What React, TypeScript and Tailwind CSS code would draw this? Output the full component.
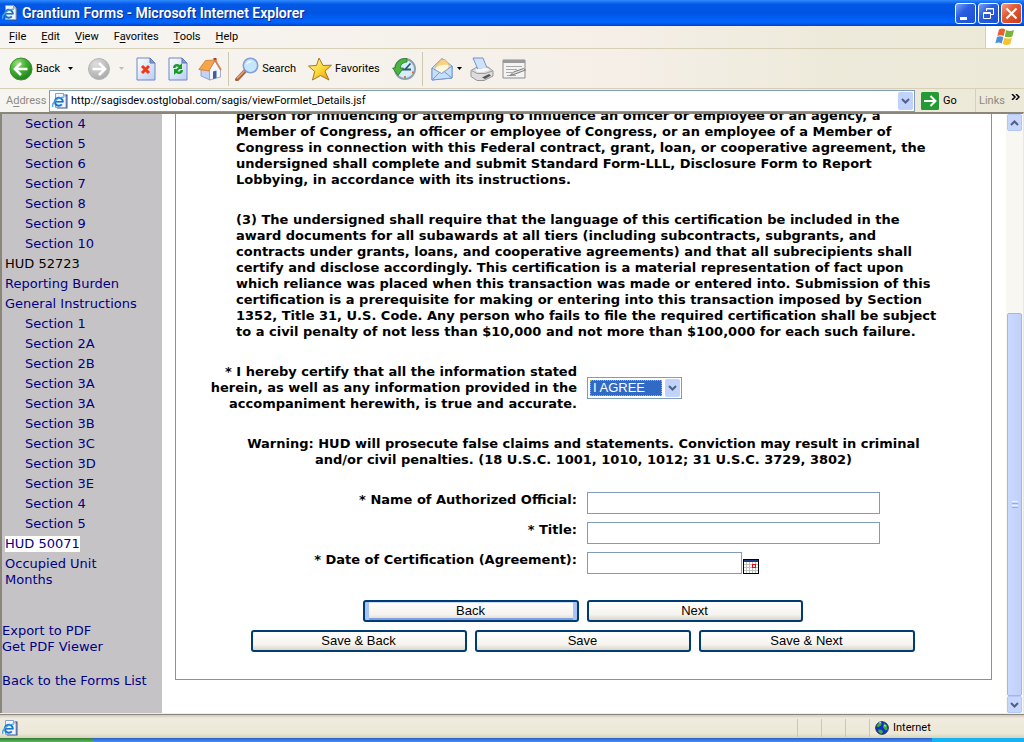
import React, { useState } from 'react';

const UI_FONT = "font-['Tahoma','Roboto','Liberation_Sans',sans-serif]";

interface NavItem {
  label: string;
  kind: 'section' | 'heading' | 'link' | 'current';
}

const NAV: NavItem[] = [
  { label: 'Section 4', kind: 'section' },
  { label: 'Section 5', kind: 'section' },
  { label: 'Section 6', kind: 'section' },
  { label: 'Section 7', kind: 'section' },
  { label: 'Section 8', kind: 'section' },
  { label: 'Section 9', kind: 'section' },
  { label: 'Section 10', kind: 'section' },
  { label: 'HUD 52723', kind: 'heading' },
  { label: 'Reporting Burden', kind: 'link' },
  { label: 'General Instructions', kind: 'link' },
  { label: 'Section 1', kind: 'section' },
  { label: 'Section 2A', kind: 'section' },
  { label: 'Section 2B', kind: 'section' },
  { label: 'Section 3A', kind: 'section' },
  { label: 'Section 3A', kind: 'section' },
  { label: 'Section 3B', kind: 'section' },
  { label: 'Section 3C', kind: 'section' },
  { label: 'Section 3D', kind: 'section' },
  { label: 'Section 3E', kind: 'section' },
  { label: 'Section 4', kind: 'section' },
  { label: 'Section 5', kind: 'section' },
  { label: 'HUD 50071', kind: 'current' },
  { label: 'Occupied Unit Months', kind: 'link' },
];

const MENUS: [string, string, string][] = [
  ['', 'F', 'ile'],
  ['', 'E', 'dit'],
  ['', 'V', 'iew'],
  ['F', 'a', 'vorites'],
  ['', 'T', 'ools'],
  ['', 'H', 'elp'],
];

function PageIcon() {
  return (
    <svg viewBox="0 0 16 16" className="size-4 shrink-0" aria-hidden="true">
      <path d="M5 1.500h10.500v14H5z" fill="#3c4f86" />
      <path d="M3.500.5h8l2.500 2.500v11.500H3.500z" fill="#eef5ff" stroke="#8aa0cc" />
      <path d="M11.500.5v2.500H14" fill="#c5d6f2" stroke="#8aa0cc" />
      <path d="M10.800 8.800a4 4 0 1 0-1 2.600" fill="none" stroke="#1a74c8" strokeWidth="2" />
      <path d="M3.500 8.800h8" stroke="#1a74c8" strokeWidth="1.600" />
      <path d="M1 14C-1 10.500 6 3.500 12 4.200" fill="none" stroke="#45a5ea" strokeWidth="1.200" />
    </svg>
  );
}

function BackIcon() {
  return (
    <svg viewBox="0 0 24 24" className="size-6" aria-hidden="true">
      <defs>
        <radialGradient id="green" cx=".35" cy=".25" r=".8">
          <stop offset="0" stopColor="#9be07c" />
          <stop offset=".5" stopColor="#3fae30" />
          <stop offset="1" stopColor="#1f7d1a" />
        </radialGradient>
      </defs>
      <circle cx="12" cy="12" r="11" fill="url(#green)" stroke="#3d8f33" />
      <path d="M12 6l-6 6 6 6M6.500 12H18.500" fill="none" stroke="#fff" strokeWidth="2.600" />
    </svg>
  );
}

function ForwardIcon() {
  return (
    <svg viewBox="0 0 24 24" className="size-6" aria-hidden="true">
      <defs>
        <radialGradient id="grey" cx=".35" cy=".25" r=".8">
          <stop offset="0" stopColor="#dedede" />
          <stop offset="1" stopColor="#a9a9a9" />
        </radialGradient>
      </defs>
      <circle cx="12" cy="12" r="10.500" fill="url(#grey)" stroke="#b5b5b5" />
      <path d="M12 6l6 6-6 6M17.500 12H5.500" fill="none" stroke="#fff" strokeWidth="2.600" />
    </svg>
  );
}

function SheetIcon({ children }: { children: React.ReactNode }) {
  return (
    <svg viewBox="0 0 20 24" className="h-6 w-5" aria-hidden="true">
      <defs>
        <linearGradient id="sheet" x1="0" y1="0" x2="1" y2="1">
          <stop offset="0" stopColor="#fff" />
          <stop offset="1" stopColor="#b9cdf3" />
        </linearGradient>
      </defs>
      <path d="M1 1h13l5 5v17H1z" fill="url(#sheet)" stroke="#6d88c4" />
      <path d="M14 1v5h5z" fill="#7d9bdc" stroke="#5c78b8" />
      {children}
    </svg>
  );
}

function HomeIcon() {
  return (
    <svg viewBox="0 0 24 24" className="size-6" aria-hidden="true">
      <path d="M15.500 1h3v6h-3z" fill="#b8321c" />
      <path d="M3 11v8l9 4V10z" fill="#c3d2f2" stroke="#7187c0" strokeWidth=".7" />
      <path d="M11.500 12l5.500-8 5.500 9v7l-11 3z" fill="#f4f8ff" stroke="#7d93c6" strokeWidth=".7" />
      <path d="M.8 12.500L7.500 3.500l9.500-.5-6 11z" fill="#f5a54a" stroke="#d07a30" strokeWidth=".8" />
      <path d="M17 3l6 10" stroke="#d98145" strokeWidth="1.700" />
      <path d="M15 14.500l3.500-1v7.500l-3.500 1z" fill="#3f5f9f" />
    </svg>
  );
}

function SearchIcon() {
  return (
    <svg viewBox="0 0 24 24" className="size-6" aria-hidden="true">
      <path d="M9.500 14.500L2 22.500" stroke="#a9623c" strokeWidth="4" strokeLinecap="round" />
      <path d="M9 14.200L2.500 21" stroke="#e5a477" strokeWidth="1.500" strokeLinecap="round" />
      <circle cx="15.500" cy="8.500" r="7.200" fill="#c6e6fb" stroke="#809fd4" strokeWidth="1.600" />
      <path d="M11 7.500c1-3 4-4 6.500-3.300-2 .6-4.500 2-6.500 3.300z" fill="#fff" />
    </svg>
  );
}

function StarIcon() {
  return (
    <svg viewBox="0 0 24 24" className="size-6" aria-hidden="true">
      <defs>
        <linearGradient id="star" x1="0" y1="0" x2="1" y2="1">
          <stop offset="0" stopColor="#fffbb0" />
          <stop offset=".55" stopColor="#fbd530" />
          <stop offset="1" stopColor="#d99412" />
        </linearGradient>
      </defs>
      <path d="M11 1l4 7.500 8.500-.3-6.500 6 4 8.800-8.500-4.500L4.500 23l2.200-8.500L.5 9l8-.5z" fill="url(#star)" stroke="#a8781c" strokeLinejoin="round" />
    </svg>
  );
}

function HistoryIcon() {
  return (
    <svg viewBox="0 0 24 24" className="size-6" aria-hidden="true">
      <circle cx="13" cy="12" r="10" fill="#d4effc" stroke="#8fa0ae" strokeWidth="2" />
      <path d="M13 12.500l5.500-6M10 12.500h9" stroke="#35566f" strokeWidth="1.800" />
      <path d="M13 19v2M20 15l1.500.5" stroke="#d65a2c" strokeWidth="1.500" />
      <path d="M15 1.500C7.500 1 3.500 5.500 3.300 11H.6L6 18.500 11.500 11H8.300C8.600 7.500 10.500 5.500 15 5z" fill="#4bb53f" stroke="#237821" strokeWidth=".8" />
    </svg>
  );
}

function MailIcon() {
  return (
    <svg viewBox="0 0 22 24" className="h-6 w-[22px]" aria-hidden="true">
      <path d="M1 11L11 1.500l10 7.500v12L1 23z" fill="#d9e9fc" stroke="#7796d2" />
      <path d="M4 10l6-7.500h4L18 7v6l-7 4-7-4z" fill="#f8d184" stroke="#d9a757" strokeWidth=".7" />
      <path d="M4.500 11c3-3 9-4 13-3v5l-7 4-6-3.500z" fill="#fff6de" />
      <path d="M1 11l9.500 5.500L21 9v12L1 23z" fill="#c4e0fa" stroke="#7796d2" />
      <path d="M1 23l8-8M21 21l-8-6.500" stroke="#7796d2" />
    </svg>
  );
}

function PrintIcon() {
  return (
    <svg viewBox="0 0 24 24" className="size-6" aria-hidden="true">
      <path d="M1 13.500L7 10h11l5 4v5l-9 4.500H7l-6-4z" fill="#dcdcdc" stroke="#969696" />
      <path d="M3 1h10l4 10-9 1.500z" fill="#cfe2fc" stroke="#7893c8" />
      <path d="M5.500 12.500l11-2 3 2.500-6 2H7z" fill="#f7f7f7" />
      <path d="M1.500 13.500L7 16.500h8l7.500-2.500" fill="none" stroke="#9c9c9c" />
      <path d="M12 20.500l7-3.500 2 1.500-6 3.500z" fill="#565656" />
    </svg>
  );
}

function EditIcon() {
  return (
    <svg viewBox="0 0 24 20" className="h-5 w-6" aria-hidden="true">
      <path d="M1 1h22v18H1z" fill="#f3f3f3" stroke="#8c8c8c" />
      <path d="M1 1h22v3H1z" fill="#9a9a9a" />
      <path d="M4 7.500h16M4 10.500h11M4 13.500h6M5 16.500h9" stroke="#a7a7a7" />
      <path d="M8 16.500l3.500-3.500 10-3.500 2 1.500-10.500 4z" fill="#dedede" stroke="#7b7b7b" />
    </svg>
  );
}

function WindowsFlag() {
  return (
    <svg viewBox="0 0 20 18" className="h-[18px] w-5" aria-hidden="true">
      <path d="M4 1.500C6.500 0 8.500.4 10.200 1.600L8.600 8C6.500 7 4.500 6.800 2.300 8z" fill="#e9602c" />
      <path d="M11.200 2.100c2.300 1.300 4.800 1.300 7.800 0L17.300 8.400c-2.600 1.200-5.200 1.200-7.600 0z" fill="#76b43a" />
      <path d="M2 9.100c2.300-1.200 4.400-1 6.400.1L6.700 15.500c-2-1.200-4-1.300-6.400-.1z" fill="#4b8fdd" />
      <path d="M9.400 9.700c2.500 1.200 5 1.200 7.600 0l-1.700 6.300c-2.600 1.300-5.100 1.200-7.600 0z" fill="#f6c32c" />
    </svg>
  );
}

function GlobeIcon() {
  return (
    <svg viewBox="0 0 14 14" className="size-3.5" aria-hidden="true">
      <circle cx="7" cy="7" r="6.300" fill="#1230c8" stroke="#18304a" />
      <path d="M3 2.500L7 1.500 6 4.500 3.500 6l-2-.5zM9 2l3 2.500.5 4-2 1L8 6zM3.500 8.500L7 9l1 2.500-2 1.500-2.500-2z" fill="#38b044" />
      <path d="M4 2l2-.5M9 4.500l2 .5" stroke="#c8f0d0" />
    </svg>
  );
}

function CalendarIcon() {
  return (
    <svg viewBox="0 0 16 15" className="h-[15px] w-4" shapeRendering="crispEdges" aria-hidden="true">
      <path d="M.5.500h15v14H.500z" fill="#fff" stroke="#000" />
      <path d="M1 1h14v2H1z" fill="#213a7d" />
      <path d="M3.500 3v11M6.500 3v11M9.500 3v11M12.500 3v11M1 5.500h14M1 8.500h14M1 11.500h14" stroke="#c0c0c0" />
      <path d="M9.500 5.500h3v3h-3z" fill="#fff" stroke="#f00" />
    </svg>
  );
}

function Chevron({ up = false }: { up?: boolean }) {
  return (
    <svg viewBox="0 0 9 6" className="h-1.5 w-[9px]" aria-hidden="true">
      <path d={up ? 'M1 5l3.500-3.500L8 5' : 'M1 1l3.500 3.500L8 1'} fill="none" stroke="#4d6185" strokeWidth="2" />
    </svg>
  );
}

function Caret({ color }: { color: string }) {
  return (
    <svg viewBox="0 0 5 3" className="h-[3px] w-[5px]" aria-hidden="true">
      <path d="M0 0h5L2.500 3z" fill={color} />
    </svg>
  );
}

function TitleBar() {
  const button = 'flex size-[21px] items-center justify-center rounded-[3px] border border-white';
  return (
    <header className="flex h-[26px] shrink-0 items-center bg-[linear-gradient(#2f8bff,#0458e6_16%,#0054e3_50%,#0066ff_85%,#0140c8)] pr-0.5 pl-0.5">
      <PageIcon />
      <h1 className="ml-1 flex-1 text-sm font-semibold text-white [text-shadow:1px_1px_#0a2a88]">
        Grantium Forms - Microsoft Internet Explorer
      </h1>
      <div className="flex gap-0.5">
        <button aria-label="Minimize" className={`${button} bg-[linear-gradient(135deg,#7ba2f3,#2a5de0_40%,#1c4fd8)]`}>
          <svg viewBox="0 0 19 19" className="size-[19px]"><path d="M4 13h7v3H4z" fill="#fff" /></svg>
        </button>
        <button aria-label="Restore" className={`${button} bg-[linear-gradient(135deg,#7ba2f3,#2a5de0_40%,#1c4fd8)]`}>
          <svg viewBox="0 0 19 19" className="size-[19px]" fill="none" stroke="#fff">
            <path d="M7.500 7V4.500h7v6H12M7 5h8" />
            <path d="M4.500 8.500h7v6h-7zM4 9.500h8" />
          </svg>
        </button>
        <button aria-label="Close" className={`${button} bg-[linear-gradient(135deg,#f0a088,#e25a38_40%,#c83c18)]`}>
          <svg viewBox="0 0 19 19" className="size-[19px]"><path d="M4.500 4.500l10 10M14.500 4.500l-10 10" stroke="#fff" strokeWidth="2.200" /></svg>
        </button>
      </div>
    </header>
  );
}

function MenuBar() {
  return (
    <nav className="flex h-[23px] shrink-0 border-b border-[#d8d0b4]">
      <div className="flex flex-1 items-center gap-[15px] pl-[9px]">
        {MENUS.map(([before, key, after]) => (
          <button key={before + key + after}>
            {before}<span className="underline underline-offset-2">{key}</span>{after}
          </button>
        ))}
      </div>
      <div className="flex w-[39px] items-center justify-center border-l border-[#d8d0b4] bg-white">
        <WindowsFlag />
      </div>
    </nav>
  );
}

function Toolbar() {
  return (
    <div className="flex h-10 shrink-0 items-center border-b border-[#d8d0b4] pl-[9px]">
      <button className="flex items-center gap-[3px]"><BackIcon />Back</button>
      <button className="ml-2" aria-label="Back history"><Caret color="#000" /></button>
      <button className="ml-3.5" aria-label="Forward"><ForwardIcon /></button>
      <button className="ml-2" aria-label="Forward history"><Caret color="#bbb" /></button>
      <button className="ml-3" aria-label="Stop">
        <SheetIcon><path d="M6 9l7 7M13 9l-7 7" stroke="#ee3a16" strokeWidth="3" /></SheetIcon>
      </button>
      <button className="ml-3" aria-label="Refresh">
        <SheetIcon>
          <path d="M5 11c0-4 4-5 7-3l2-2v6H8.500l2-2C9 9 7.500 9.500 7.500 11z" fill="#1c9a26" />
          <path d="M15 13c0 4-4 5-7 3l-2 2v-6h5.500l-2 2c1.500 1 3 .5 3-1z" fill="#1c9a26" />
        </SheetIcon>
      </button>
      <button className="ml-2.5" aria-label="Home"><HomeIcon /></button>
      <div className="ml-1.5 h-[34px] w-px bg-[#cfc8b0]" />
      <button className="ml-1.5 flex items-center gap-[3px]"><SearchIcon />Search</button>
      <button className="ml-3 flex items-center gap-[3px]"><StarIcon />Favorites</button>
      <button className="ml-3" aria-label="History"><HistoryIcon /></button>
      <div className="ml-1.5 h-[34px] w-px bg-[#cfc8b0]" />
      <button className="ml-2 flex items-center gap-1" aria-label="Mail"><MailIcon /><Caret color="#000" /></button>
      <button className="ml-2" aria-label="Print"><PrintIcon /></button>
      <button className="ml-2" aria-label="Edit"><EditIcon /></button>
    </div>
  );
}

function AddressBar() {
  return (
    <div className="flex h-[23px] shrink-0 items-center pl-1.5">
      <label htmlFor="address" className="w-[43px] text-[#8c8a80]">A<span className="underline underline-offset-2">d</span>dress</label>
      <div className="flex h-[22px] flex-1 items-center border border-[#7f9db9] bg-white pr-px pl-0.5">
        <PageIcon />
        <input id="address" defaultValue="http://sagisdev.ostglobal.com/sagis/viewFormlet_Details.jsf" className="ml-[3px] h-full min-w-0 flex-1 outline-none" />
        <button aria-label="Show addresses" className="flex h-[18px] w-[15px] items-center justify-center rounded-xs bg-[#c1d3fb]"><Chevron /></button>
      </div>
      <button className="ml-1.5 flex w-[54px] items-center gap-1">
        <svg viewBox="0 0 18 18" className="size-[18px]" aria-hidden="true">
          <rect width="18" height="18" rx="1.500" fill="#239a33" />
          <path d="M9.500 4l5 5-5 5M14 9H3" fill="none" stroke="#fff" strokeWidth="2" />
        </svg>
        Go
      </button>
      <div className="flex h-full w-[49px] items-center justify-between border-l border-[#d8d0b4] pr-1 pl-[3px] text-[#8c8a80]">
        Links
        <svg viewBox="0 0 9 6" className="mb-2 h-1.5 w-[9px]" aria-hidden="true">
          <path d="M1 0l3 3-3 3M5 0l3 3-3 3" fill="none" stroke="#000" strokeWidth="1.500" />
        </svg>
      </div>
    </div>
  );
}

function Sidebar() {
  return (
    <aside className="flex w-40 shrink-0 flex-col justify-end overflow-hidden bg-[#c6c3c6] pb-6 text-[#000084]">
      <ul className="pl-[3px]">
        {NAV.map((item, i) => (
          <li key={i} className={item.kind === 'section' ? 'py-0.5 pl-5' : 'py-0.5 pr-4'}>
            {item.kind === 'heading' ? (
              <span className="text-black">{item.label}</span>
            ) : (
              <a href="#" className={item.kind === 'current' ? 'block w-fit bg-white' : 'block'}>
                {item.label}
              </a>
            )}
          </li>
        ))}
      </ul>
      <a href="#" className="mt-[33px]">Export to PDF</a>
      <a href="#">Get PDF Viewer</a>
      <a href="#" className="mt-[18px] whitespace-nowrap">Back to the Forms List</a>
    </aside>
  );
}

const FIELD = 'h-[22px] border border-[#7f9db9] bg-white px-1 outline-none';
const BUTTON =
  "h-[22px] w-[216px] rounded-[3px] border-2 border-[#003c74] bg-[linear-gradient(#fff,#f5f3ee_70%,#dcd6ca)] font-['Liberation_Sans',sans-serif] text-[13px] leading-4 font-normal";

function CertificationForm() {
  const [agree, setAgree] = useState('I AGREE');

  return (
    <form className="border border-[#6699cc] pb-[27px] font-bold" onSubmit={(e) => e.preventDefault()}>
      <div className="pl-[60px] whitespace-nowrap">
        <p>
          person for influencing or attempting to influence an officer or employee of an agency, a<br />
          Member of Congress, an officer or employee of Congress, or an employee of a Member of<br />
          Congress in connection with this Federal contract, grant, loan, or cooperative agreement, the<br />
          undersigned shall complete and submit Standard Form-LLL, Disclosure Form to Report<br />
          Lobbying, in accordance with its instructions.
        </p>
        <p className="mt-6">
          (3) The undersigned shall require that the language of this certification be included in the<br />
          award documents for all subawards at all tiers (including subcontracts, subgrants, and<br />
          contracts under grants, loans, and cooperative agreements) and that all subrecipients shall<br />
          certify and disclose accordingly. This certification is a material representation of fact upon<br />
          which reliance was placed when this transaction was made or entered into. Submission of this<br />
          certification is a prerequisite for making or entering into this transaction imposed by Section<br />
          1352, Title 31, U.S. Code. Any person who fails to file the required certification shall be subject<br />
          to a civil penalty of not less than $10,000 and not more than $100,000 for each such failure.
        </p>
      </div>

      <div className="mt-6 grid grid-cols-[401px_1fr] items-center gap-x-2.5">
        <label htmlFor="agree" className="text-right whitespace-nowrap">
          * I hereby certify that all the information stated<br />
          herein, as well as any information provided in the<br />
          accompaniment herewith, is true and accurate.
        </label>
        <div className="relative h-[22px] w-[95px] border border-[#7f9db9] bg-white p-0.5">
          <select
            id="agree"
            value={agree}
            onChange={(e) => setAgree(e.target.value)}
            className="block h-4 w-[72px] appearance-none bg-[#316ac5] pl-[3px] font-['Liberation_Sans',sans-serif] text-[13px] leading-4 font-normal text-white outline-1 -outline-offset-1 outline-[#d8a840] outline-dotted"
          >
            <option>I AGREE</option>
            <option>I DO NOT AGREE</option>
          </select>
          <span className="pointer-events-none absolute top-px right-px flex h-[18px] w-[15px] items-center justify-center rounded-xs bg-[#c1d3fb]">
            <Chevron />
          </span>
        </div>
      </div>

      <p className="mt-6 text-center whitespace-nowrap">
        Warning: HUD will prosecute false claims and statements. Conviction may result in criminal<br />
        and/or civil penalties. (18 U.S.C. 1001, 1010, 1012; 31 U.S.C. 3729, 3802)
      </p>

      <div className="mt-6 grid grid-cols-[401px_1fr] gap-x-2.5 gap-y-2">
        <label htmlFor="official" className="text-right">* Name of Authorized Official:</label>
        <input id="official" className={`${FIELD} w-[293px]`} />
        <label htmlFor="title" className="text-right">* Title:</label>
        <input id="title" className={`${FIELD} w-[293px]`} />
        <label htmlFor="date" className="text-right">* Date of Certification (Agreement):</label>
        <div className="flex items-end gap-px">
          <input id="date" className={`${FIELD} w-[155px]`} />
          <button aria-label="Pick a date"><CalendarIcon /></button>
        </div>
      </div>

      <div className="mt-[26px] flex flex-col gap-2 pr-0.5">
        <div className="flex justify-center gap-2">
          <button className={`${BUTTON} shadow-[inset_4px_0_#a9c3f5,inset_-4px_0_#a9c3f5,inset_0_-2px_#7f9fe0,inset_0_1px_#cfe0fc]`}>Back</button>
          <button className={BUTTON}>Next</button>
        </div>
        <div className="flex justify-center gap-2">
          <button className={BUTTON}>Save &amp; Back</button>
          <button className={BUTTON}>Save</button>
          <button className={BUTTON}>Save &amp; Next</button>
        </div>
      </div>
    </form>
  );
}

function ScrollBar() {
  const arrow = 'flex h-[17px] shrink-0 items-center justify-center rounded-xs border border-[#b4c8f6] bg-[#c6d6fd]';
  return (
    <div className="flex w-[17px] shrink-0 flex-col bg-[#f8f7f2] px-px">
      <button aria-label="Scroll up" className={arrow}><Chevron up /></button>
      <div className="flex-[183]" />
      <div className="flex flex-[382] flex-col items-center justify-center gap-px rounded-xs border border-[#9db7ee] bg-[linear-gradient(90deg,#cad9fe,#bfd0fb)]">
        <i className="h-px w-1.5 bg-[#eef4fe]" />
        <i className="h-px w-1.5 bg-[#8cb0f8]" />
        <i className="h-px w-1.5 bg-[#eef4fe]" />
        <i className="h-px w-1.5 bg-[#8cb0f8]" />
      </div>
      <button aria-label="Scroll down" className={arrow}><Chevron /></button>
    </div>
  );
}

function StatusBar() {
  return (
    <footer className="flex h-6 shrink-0 items-center border-t border-[#8a877a] bg-[linear-gradient(#d0ccbc,#efebde_15%,#ece9d8_80%,#d8d2bc)] pt-0.5 pl-0.5">
      <PageIcon />
      <div className="flex h-[18px] flex-1 justify-end">
        <div className="w-6 border-l border-[#cbc7b5]" />
        <div className="w-6 border-l border-[#cbc7b5]" />
        <div className="w-6 border-l border-[#cbc7b5]" />
      </div>
      <div className="flex h-[18px] w-[155px] items-center gap-1 border-l border-[#cbc7b5] pl-[5px]">
        <GlobeIcon />
        Internet
      </div>
    </footer>
  );
}

export default function App() {
  return (
    <div className={`flex h-screen flex-col overflow-hidden text-[11px] leading-4 text-black ${UI_FONT}`}>
      <TitleBar />
      <div className="shrink-0 bg-[linear-gradient(90deg,#f7f5f1,#f5efe8_60%,#eeeadb_80%,#ece9d8)]">
        <MenuBar />
        <Toolbar />
        <AddressBar />
      </div>
      <div className="flex min-h-0 flex-1 border-t-2 border-r border-l-2 border-[#8a877a] border-r-[#ece9d8] bg-white font-['Verdana','DejaVu_Sans',sans-serif] text-[13px]">
        <Sidebar />
        <main className="flex min-w-0 flex-1 flex-col justify-end overflow-hidden pr-3.5 pb-[33px] pl-[13px]">
          <CertificationForm />
        </main>
        <ScrollBar />
      </div>
      <div className="h-px shrink-0 bg-[#f1efe2]" />
      <StatusBar />
      <div className="flex h-1 shrink-0 bg-[linear-gradient(#2a62c8,#4690f4)]">
        <div className="w-[94px] rounded-tr-sm bg-[linear-gradient(#2f7d32,#5cb85a)]" />
        <div className="flex-1" />
        <div className="w-[92px] bg-[#14b4f4]" />
      </div>
    </div>
  );
}
